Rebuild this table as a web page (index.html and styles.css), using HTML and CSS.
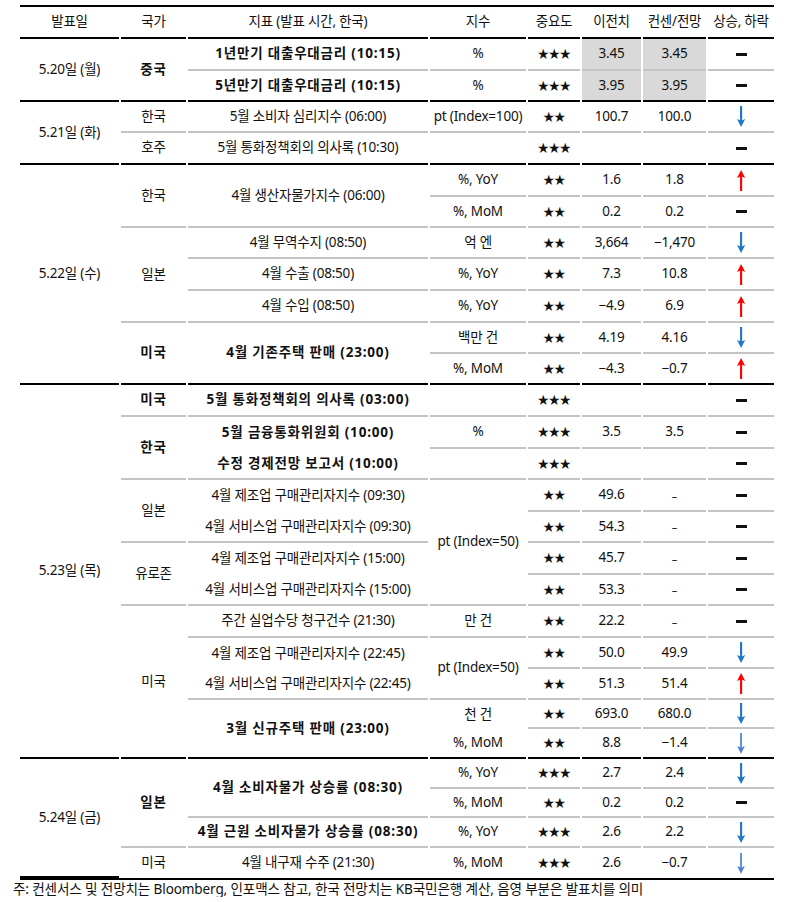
FILE: index.html
```html
<!DOCTYPE html>
<html lang="ko">
<head>
<meta charset="utf-8">
<title>주간 경제지표 일정</title>
<link rel="stylesheet" href="styles.css">
</head>
<body>
<div class="page">
  <div class="cal">
    <!-- header -->
    <div class="c k">발표일</div>
    <div class="c k">국가</div>
    <div class="c k">지표 (발표 시간, 한국)</div>
    <div class="c k">지수</div>
    <div class="c k">중요도</div>
    <div class="c k">이전치</div>
    <div class="c k">컨센/전망</div>
    <div class="c k">상승, 하락</div>

    <!-- 5.20 -->
    <div class="c k s2">5.20일 (월)</div>
    <div class="c k s2 b">중국</div>
    <div class="c g b">1년만기 대출우대금리 (10:15)</div>
    <div class="c g">%</div>
    <div class="c g st">★★★</div>
    <div class="c g sh">3.45</div>
    <div class="c g sh">3.45</div>
    <div class="c g"><span class="dash"></span></div>

    <div class="c k b">5년만기 대출우대금리 (10:15)</div>
    <div class="c k">%</div>
    <div class="c k st">★★★</div>
    <div class="c k sh">3.95</div>
    <div class="c k sh">3.95</div>
    <div class="c k"><span class="dash"></span></div>

    <!-- 5.21 -->
    <div class="c k s2">5.21일 (화)</div>
    <div class="c g">한국</div>
    <div class="c g">5월 소비자 심리지수 (06:00)</div>
    <div class="c g">pt (Index=100)</div>
    <div class="c g st">★★</div>
    <div class="c g">100.7</div>
    <div class="c g">100.0</div>
    <div class="c g"><svg class="arr down" viewBox="0 0 10 22"><rect x="4" y="0" width="2.2" height="17"/><path d="M0.8 13.5 L5.1 22 L9.4 13.5 L5.1 15.5 Z"/></svg></div>

    <div class="c k">호주</div>
    <div class="c k">5월 통화정책회의 의사록 (10:30)</div>
    <div class="c k"></div>
    <div class="c k st">★★★</div>
    <div class="c k"></div>
    <div class="c k"></div>
    <div class="c k"><span class="dash"></span></div>

    <!-- 5.22 -->
    <div class="c k s7">5.22일 (수)</div>
    <div class="c g s2">한국</div>
    <div class="c g s2">4월 생산자물가지수 (06:00)</div>
    <div class="c g">%, YoY</div>
    <div class="c g st">★★</div>
    <div class="c g">1.6</div>
    <div class="c g">1.8</div>
    <div class="c g"><svg class="arr up" viewBox="0 0 10 22"><rect x="4" y="5" width="2.2" height="17"/><path d="M0.8 8.5 L5.1 0 L9.4 8.5 L5.1 6.5 Z"/></svg></div>

    <div class="c g">%, MoM</div>
    <div class="c g st">★★</div>
    <div class="c g">0.2</div>
    <div class="c g">0.2</div>
    <div class="c g"><span class="dash"></span></div>

    <div class="c g s3">일본</div>
    <div class="c g">4월 무역수지 (08:50)</div>
    <div class="c g">억 엔</div>
    <div class="c g st">★★</div>
    <div class="c g">3,664</div>
    <div class="c g">−1,470</div>
    <div class="c g"><svg class="arr down" viewBox="0 0 10 22"><rect x="4" y="0" width="2.2" height="17"/><path d="M0.8 13.5 L5.1 22 L9.4 13.5 L5.1 15.5 Z"/></svg></div>

    <div class="c g">4월 수출 (08:50)</div>
    <div class="c g">%, YoY</div>
    <div class="c g st">★★</div>
    <div class="c g">7.3</div>
    <div class="c g">10.8</div>
    <div class="c g"><svg class="arr up" viewBox="0 0 10 22"><rect x="4" y="5" width="2.2" height="17"/><path d="M0.8 8.5 L5.1 0 L9.4 8.5 L5.1 6.5 Z"/></svg></div>

    <div class="c g">4월 수입 (08:50)</div>
    <div class="c g">%, YoY</div>
    <div class="c g st">★★</div>
    <div class="c g">−4.9</div>
    <div class="c g">6.9</div>
    <div class="c g"><svg class="arr up" viewBox="0 0 10 22"><rect x="4" y="5" width="2.2" height="17"/><path d="M0.8 8.5 L5.1 0 L9.4 8.5 L5.1 6.5 Z"/></svg></div>

    <div class="c k s2 b">미국</div>
    <div class="c k s2 b">4월 기존주택 판매 (23:00)</div>
    <div class="c g">백만 건</div>
    <div class="c g st">★★</div>
    <div class="c g">4.19</div>
    <div class="c g">4.16</div>
    <div class="c g"><svg class="arr down" viewBox="0 0 10 22"><rect x="4" y="0" width="2.2" height="17"/><path d="M0.8 13.5 L5.1 22 L9.4 13.5 L5.1 15.5 Z"/></svg></div>

    <div class="c k">%, MoM</div>
    <div class="c k st">★★</div>
    <div class="c k">−4.3</div>
    <div class="c k">−0.7</div>
    <div class="c k"><svg class="arr up" viewBox="0 0 10 22"><rect x="4" y="5" width="2.2" height="17"/><path d="M0.8 8.5 L5.1 0 L9.4 8.5 L5.1 6.5 Z"/></svg></div>

    <!-- 5.23 -->
    <div class="c k s12">5.23일 (목)</div>
    <div class="c g b">미국</div>
    <div class="c g b">5월 통화정책회의 의사록 (03:00)</div>
    <div class="c g"></div>
    <div class="c g st">★★★</div>
    <div class="c g"></div>
    <div class="c g"></div>
    <div class="c g"><span class="dash"></span></div>

    <div class="c g s2 b">한국</div>
    <div class="c b">5월 금융통화위원회 (10:00)</div>
    <div class="c g">%</div>
    <div class="c g st">★★★</div>
    <div class="c g">3.5</div>
    <div class="c g">3.5</div>
    <div class="c g"><span class="dash"></span></div>

    <div class="c g b">수정 경제전망 보고서 (10:00)</div>
    <div class="c g"></div>
    <div class="c g st">★★★</div>
    <div class="c g"></div>
    <div class="c g"></div>
    <div class="c g"><span class="dash"></span></div>

    <div class="c g s2">일본</div>
    <div class="c">4월 제조업 구매관리자지수 (09:30)</div>
    <div class="c g s4">pt (Index=50)</div>
    <div class="c g st">★★</div>
    <div class="c g">49.6</div>
    <div class="c g"><span class="nd">–</span></div>
    <div class="c g"><span class="dash"></span></div>

    <div class="c g">4월 서비스업 구매관리자지수 (09:30)</div>
    <div class="c g st">★★</div>
    <div class="c g">54.3</div>
    <div class="c g"><span class="nd">–</span></div>
    <div class="c g"><span class="dash"></span></div>

    <div class="c g s2">유로존</div>
    <div class="c">4월 제조업 구매관리자지수 (15:00)</div>
    <div class="c g st">★★</div>
    <div class="c g">45.7</div>
    <div class="c g"><span class="nd">–</span></div>
    <div class="c g"><span class="dash"></span></div>

    <div class="c g">4월 서비스업 구매관리자지수 (15:00)</div>
    <div class="c g st">★★</div>
    <div class="c g">53.3</div>
    <div class="c g"><span class="nd">–</span></div>
    <div class="c g"><span class="dash"></span></div>

    <div class="c k s5">미국</div>
    <div class="c g">주간 실업수당 청구건수 (21:30)</div>
    <div class="c g">만 건</div>
    <div class="c g st">★★</div>
    <div class="c g">22.2</div>
    <div class="c g"><span class="nd">–</span></div>
    <div class="c g"><span class="dash"></span></div>

    <div class="c">4월 제조업 구매관리자지수 (22:45)</div>
    <div class="c g s2">pt (Index=50)</div>
    <div class="c g st">★★</div>
    <div class="c g">50.0</div>
    <div class="c g">49.9</div>
    <div class="c g"><svg class="arr down" viewBox="0 0 10 22"><rect x="4" y="0" width="2.2" height="17"/><path d="M0.8 13.5 L5.1 22 L9.4 13.5 L5.1 15.5 Z"/></svg></div>

    <div class="c g">4월 서비스업 구매관리자지수 (22:45)</div>
    <div class="c g st">★★</div>
    <div class="c g">51.3</div>
    <div class="c g">51.4</div>
    <div class="c g"><svg class="arr up" viewBox="0 0 10 22"><rect x="4" y="5" width="2.2" height="17"/><path d="M0.8 8.5 L5.1 0 L9.4 8.5 L5.1 6.5 Z"/></svg></div>

    <div class="c k s2 b">3월 신규주택 판매 (23:00)</div>
    <div class="c">천 건</div>
    <div class="c g st">★★</div>
    <div class="c g">693.0</div>
    <div class="c g">680.0</div>
    <div class="c g"><svg class="arr down" viewBox="0 0 10 22"><rect x="4" y="0" width="2.2" height="17"/><path d="M0.8 13.5 L5.1 22 L9.4 13.5 L5.1 15.5 Z"/></svg></div>

    <div class="c k">%, MoM</div>
    <div class="c k st">★★</div>
    <div class="c k">8.8</div>
    <div class="c k">−1.4</div>
    <div class="c k"><svg class="arr down2" viewBox="0 0 10 22"><rect x="4.1" y="0" width="1.8" height="17"/><path d="M1 13.5 L5 22 L9 13.5 L5 15.5 Z"/></svg></div>

    <!-- 5.24 -->
    <div class="c k s4">5.24일 (금)</div>
    <div class="c g s3 b">일본</div>
    <div class="c g s2 b">4월 소비자물가 상승률 (08:30)</div>
    <div class="c g">%, YoY</div>
    <div class="c g st">★★★</div>
    <div class="c g">2.7</div>
    <div class="c g">2.4</div>
    <div class="c g"><svg class="arr down" viewBox="0 0 10 22"><rect x="4" y="0" width="2.2" height="17"/><path d="M0.8 13.5 L5.1 22 L9.4 13.5 L5.1 15.5 Z"/></svg></div>

    <div class="c g">%, MoM</div>
    <div class="c g st">★★</div>
    <div class="c g">0.2</div>
    <div class="c g">0.2</div>
    <div class="c g"><span class="dash"></span></div>

    <div class="c g b">4월 근원 소비자물가 상승률 (08:30)</div>
    <div class="c g">%, YoY</div>
    <div class="c g st">★★★</div>
    <div class="c g">2.6</div>
    <div class="c g">2.2</div>
    <div class="c g"><svg class="arr down" viewBox="0 0 10 22"><rect x="4" y="0" width="2.2" height="17"/><path d="M0.8 13.5 L5.1 22 L9.4 13.5 L5.1 15.5 Z"/></svg></div>

    <div class="c">미국</div>
    <div class="c">4월 내구재 수주 (21:30)</div>
    <div class="c">%, MoM</div>
    <div class="c st">★★★</div>
    <div class="c">2.6</div>
    <div class="c">−0.7</div>
    <div class="c"><svg class="arr down2" viewBox="0 0 10 22"><rect x="4.1" y="0" width="1.8" height="17"/><path d="M1 13.5 L5 22 L9 13.5 L5 15.5 Z"/></svg></div>
  </div>
  <p class="note">주: 컨센서스 및 전망치는 Bloomberg, 인포맥스 참고, 한국 전망치는 KB국민은행 계산, 음영 부분은 발표치를 의미</p>
</div>
</body>
</html>
```

FILE: styles.css
```css
* { box-sizing: border-box; }

html, body {
  margin: 0;
  padding: 0;
  background: #ffffff;
}

body {
  font-family: "Noto Sans", "Noto Sans CJK KR", sans-serif;
  color: #111111;
  font-size: 13.5px;
}

.page {
  padding: 5px 0 0 13px;
}

.cal {
  margin-left: 7px;
  width: 754px;
  display: grid;
  grid-template-columns: 99px 65px 240px 96px 52px 59px 63px 66px;
  grid-template-rows:
    32px
    32px 31px 31px 32px
    32px 31px 31px 32px 32px 31px 31px
    32px 32px 31px 32px 31px 32px 31px 32px 31px 31px 29px 30px
    30px 29px 30px 30px;
  column-gap: 2px;
  border-top: 2px solid #000000;
  border-bottom: 2px solid #000000;
}

.c {
  display: flex;
  align-items: center;
  justify-content: center;
  white-space: nowrap;
  line-height: 1;
  letter-spacing: -0.2px;
}

.g { border-bottom: 2px solid #c4c4c4; }
.k { border-bottom: 2px solid #000000; }

.b {
  font-weight: 700;
  letter-spacing: 0.8px;
}

.s2 { grid-row: span 2; }
.s3 { grid-row: span 3; }
.s4 { grid-row: span 4; }
.s5 { grid-row: span 5; }
.s7 { grid-row: span 7; }
.s12 { grid-row: span 12; }

.sh { background: #d9d9d9; }

.st {
  font-family: "Noto Sans CJK KR", sans-serif;
  font-size: 11.5px;
  letter-spacing: -0.5px;
}

.dash {
  display: block;
  width: 11px;
  height: 3px;
  background: #111111;
}

.nd {
  font-size: 11px;
}

.arr {
  width: 10px;
  height: 21px;
  display: block;
}
.arr.up { fill: #ff0000; }
.arr.down { fill: #1f77c8; }
.arr.down2 { fill: #4f7fd6; }

.note {
  margin: 1px 0 0 0;
  font-size: 13.6px;
  line-height: 16px;
  letter-spacing: -0.15px;
  color: #111111;
}
```
